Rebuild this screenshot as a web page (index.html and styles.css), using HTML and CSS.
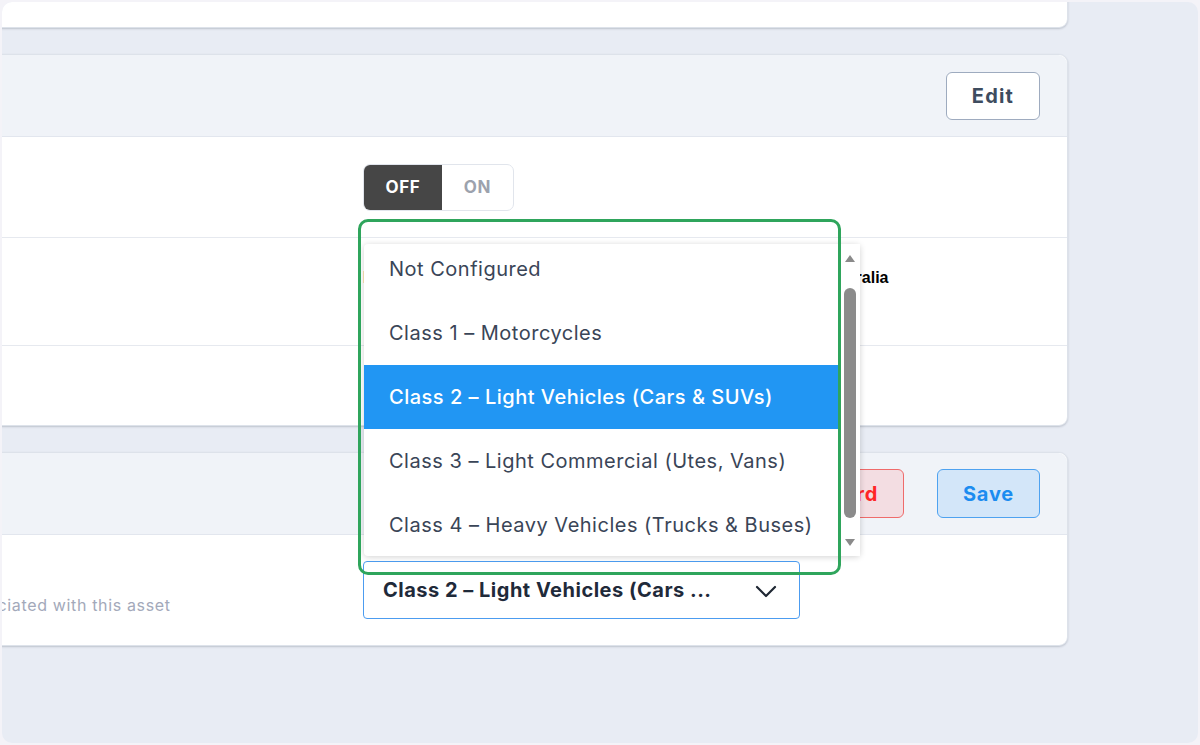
FILE: index.html
```html
<!DOCTYPE html>
<html lang="en">
<head>
<meta charset="utf-8">
<title>Asset settings</title>
<link rel="stylesheet" href="styles.css">
</head>
<body>
<div class="frame">
  <div class="column">
    <section class="card card-top">
      <div class="row row-plain">
        <div class="label"><div class="label-title">Notes</div></div>
      </div>
    </section>

    <section class="card">
      <header class="card-head">
        <h2 class="card-title">Tolling</h2>
        <button class="btn btn-outline" type="button">Edit</button>
      </header>
      <div class="row row-toggle">
        <div class="label"><div class="label-title">Tag</div></div>
        <div class="field">
          <div class="seg">
            <span class="seg-item seg-active">OFF</span>
            <span class="seg-item">ON</span>
          </div>
        </div>
        <div class="extra"></div>
      </div>
      <div class="row row-region">
        <div class="label"><div class="label-title">Region</div></div>
        <div class="field"><span class="value">Linkt</span></div>
        <div class="extra"><span class="value">Australia</span></div>
      </div>
      <div class="row row-short">
        <div class="label"><div class="label-title">Tag ID</div></div>
        <div class="field"></div>
        <div class="extra"></div>
      </div>
    </section>

    <section class="card">
      <header class="card-head">
        <h2 class="card-title">Class</h2>
        <div class="actions">
          <button class="btn btn-danger" type="button">Discard</button>
          <button class="btn btn-primary" type="button">Save</button>
        </div>
      </header>
      <div class="row row-class">
        <div class="label">
          <div class="label-title">Toll class</div>
          <div class="label-desc">Toll class for e-tag charges associated with this asset</div>
        </div>
        <div class="field">
          <div class="select">
            <span class="select-value">Class 2 – Light Vehicles (Cars ...</span>
            <svg class="chevron" width="22" height="13" viewBox="0 0 22 13" aria-hidden="true">
              <path d="M2 2 L11 11 L20 2" fill="none" stroke="#1f2733" stroke-width="2.2" stroke-linecap="round" stroke-linejoin="round"/>
            </svg>

            <div class="dropdown">
              <div class="options">
                <ul class="option-list">
                  <li class="option">Not Configured</li>
                  <li class="option">Class 1 – Motorcycles</li>
                  <li class="option option-selected">Class 2 – Light Vehicles (Cars &amp; SUVs)</li>
                  <li class="option">Class 3 – Light Commercial (Utes, Vans)</li>
                  <li class="option">Class 4 – Heavy Vehicles (Trucks &amp; Buses)</li>
                  <li class="option">Class 5 – Other</li>
                </ul>
              </div>
              <div class="scrollbar">
                <span class="scroll-arrow scroll-up"></span>
                <div class="scroll-track"><div class="scroll-thumb"></div></div>
                <span class="scroll-arrow scroll-down"></span>
              </div>
            </div>
            <div class="focus-ring"></div>
          </div>
        </div>
        <div class="extra"></div>
      </div>
    </section>
  </div>
</div>
</body>
</html>
```

FILE: styles.css
```css
* {
  box-sizing: border-box;
}

html,
body {
  margin: 0;
  padding: 0;
}

body {
  background: #f4f3f8;
  font-family: Inter, "Noto Sans", "Liberation Sans", sans-serif;
  color: #364254;
  width: 1200px;
  height: 745px;
  overflow: hidden;
}

.frame {
  margin: 2px;
  height: 741px;
  border-radius: 10px;
  background: #e8ecf4;
  overflow: hidden;
}

/* content column: the left part of the cards sits outside the view */
.column {
  width: 1363px;
  margin-left: -297px;
  margin-top: -74px;
  display: flex;
  flex-direction: column;
  gap: 26px;
}

.card {
  background: #ffffff;
  border: 1px solid #dde2ea;
  border-radius: 9px;
  box-shadow: 0 1px 2px rgba(40, 52, 75, 0.22);
}

.card-top {
  height: 100px;
}

.card-head {
  height: 82px;
  display: flex;
  align-items: center;
  justify-content: space-between;
  padding: 0 27px 0 24px;
  background: #f0f3f8;
  border-bottom: 1px solid #e2e6ee;
  border-radius: 9px 9px 0 0;
}

.card-title {
  margin: 0;
  font-size: 18px;
  font-weight: 600;
  color: #2b3646;
}

.actions {
  display: flex;
  gap: 33px;
}

.btn {
  font-family: inherit;
  font-size: 20px;
  font-weight: 700;
  height: 49px;
  border-radius: 6px;
  cursor: pointer;
}

.btn-outline {
  width: 94px;
  height: 48px;
  background: #ffffff;
  border: 1px solid #9eabbf;
  color: #3e4c5f;
  letter-spacing: 1.2px;
}

.btn-danger {
  width: 132px;
  background: #f3dde2;
  border: 1px solid #ef6b6b;
  color: #ff2626;
  letter-spacing: 0.8px;
}

.btn-primary {
  width: 103px;
  background: #d3e6f9;
  border: 1px solid #4ea2f0;
  color: #1c8cf0;
  letter-spacing: 0.8px;
}

.row {
  display: grid;
  grid-template-columns: 1fr 437px 221px;
  column-gap: 20px;
  align-items: center;
  padding: 0 26px 0 24px;
  border-bottom: 1px solid #e6e9ef;
}

.row:last-child {
  border-bottom: none;
}

.row-plain {
  height: 98px;
}

.row-toggle {
  height: 101px;
}

.row-region {
  height: 108px;
  align-items: start;
  padding-top: 28px;
}

.row-short {
  height: 79px;
}

.row-class {
  height: 110px;
}

.label-title {
  font-size: 17px;
  font-weight: 600;
  color: #2b3646;
}

.label-desc {
  margin-top: 10px;
  font-size: 16px;
  letter-spacing: 0.65px;
  color: #a3a9ba;
}

.value {
  font-family: "Liberation Sans", Arial, sans-serif;
  font-size: 16px;
  font-weight: 700;
  color: #000000;
  line-height: 24px;
}

/* OFF / ON switch */
.seg {
  display: inline-flex;
  width: 151px;
  height: 47px;
  border: 1px solid #e1e5ec;
  border-radius: 7px;
  overflow: hidden;
  background: #ffffff;
}

.seg-item {
  flex: 1;
  display: flex;
  align-items: center;
  justify-content: center;
  font-size: 17px;
  font-weight: 700;
  letter-spacing: 0.6px;
  color: #9ca2ad;
}

.seg-active {
  flex: 0 0 78px;
  background: #464646;
  color: #ffffff;
}

/* select with its open list */
.select {
  position: relative;
  height: 58px;
  display: flex;
  align-items: center;
  justify-content: space-between;
  padding: 0 22px 0 19px;
  border: 1px solid #4c9cf0;
  border-radius: 4px;
  background: #ffffff;
}

.select-value {
  font-size: 20px;
  font-weight: 700;
  letter-spacing: 0.5px;
  color: #1f2a3a;
  white-space: nowrap;
}

.chevron {
  display: block;
  margin-top: 2px;
}

.dropdown {
  position: absolute;
  left: 0;
  bottom: calc(100% + 6px);
  width: 496px;
  height: 312px;
  display: flex;
  background: #ffffff;
  border-radius: 4px;
  box-shadow: 0 1px 6px rgba(0, 0, 0, 0.18);
  z-index: 5;
}

.options {
  flex: 1;
  overflow: hidden;
}

.option-list {
  list-style: none;
  margin: -7px 0 0;
  padding: 0;
}

.option {
  height: 64px;
  display: flex;
  align-items: center;
  padding-left: 25px;
  font-size: 20px;
  letter-spacing: 0.5px;
  color: #3a4557;
  white-space: nowrap;
}

.option-selected {
  background: #2196f3;
  color: #ffffff;
  font-weight: 500;
}

.scrollbar {
  width: 20px;
  display: flex;
  flex-direction: column;
  align-items: center;
  background: #ffffff;
}

.scroll-arrow {
  height: 28px;
  width: 100%;
  display: flex;
  align-items: center;
  justify-content: center;
}

.scroll-arrow::before {
  content: "";
  width: 0;
  height: 0;
  border-left: 5.5px solid transparent;
  border-right: 5.5px solid transparent;
}

.scroll-up::before {
  border-bottom: 7px solid #8a8a8a;
}

.scroll-down::before {
  border-top: 7px solid #8a8a8a;
}

.scroll-track {
  flex: 1;
  width: 100%;
  display: flex;
  justify-content: center;
}

.scroll-thumb {
  width: 12px;
  height: 230px;
  margin-top: 16px;
  border-radius: 6px;
  background: #8b8b8b;
}

/* highlight outline drawn round the open list */
.focus-ring {
  position: absolute;
  left: -6px;
  top: -343px;
  width: 483px;
  height: 356px;
  border: 3px solid #2fa55c;
  border-radius: 10px;
  z-index: 6;
  pointer-events: none;
}
```
